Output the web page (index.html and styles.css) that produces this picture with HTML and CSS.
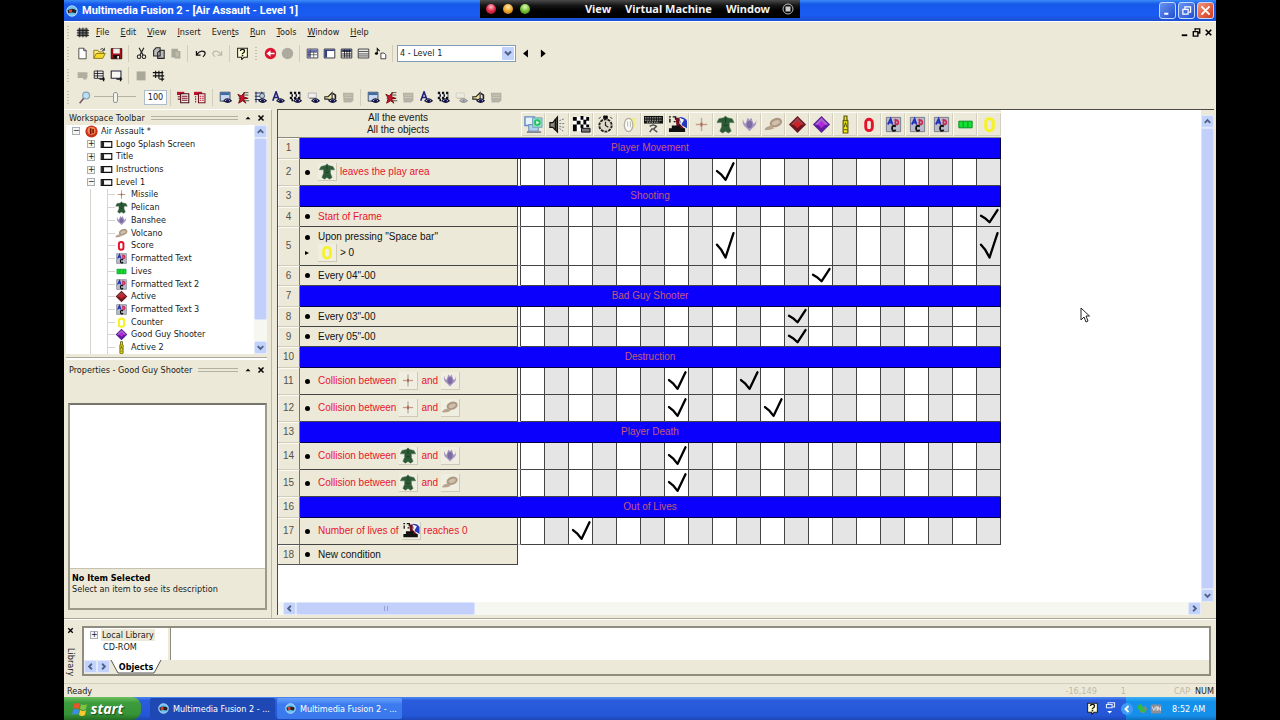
FILE: index.html
```html
<!DOCTYPE html>
<html lang="en">
<head>
<meta charset="utf-8">
<title>Multimedia Fusion 2 - [Air Assault - Level 1]</title>
<link rel="stylesheet" href="styles.css">
</head>
<body>
<svg class="defs" aria-hidden="true">
  <defs>
    <path id="check" d="M4 13L8 16.500L12.500 22.500L20.500 4.500" fill="none" stroke="#000" stroke-width="2.3" stroke-linecap="round" stroke-linejoin="round" vector-effect="non-scaling-stroke"/>
    <symbol id="i-app" viewBox="0 0 16 16"><circle cx="8" cy="8" r="7" fill="#6ac0f0" stroke="#d8f0ff"/><path d="M2 7Q8 3 14 7L13 11Q8 9 3 11z" fill="#222"/><rect x="4" y="6" width="4" height="4" fill="#e04030"/></symbol>
    <symbol id="i-grid" viewBox="0 0 16 16"><path d="M2 3h13v10H2z" fill="#777"/><path d="M1 5.500h15M1 8.500h15M1 11.500h15M4.500 2v12M8.500 2v12M12.500 2v12" stroke="#111" fill="none"/></symbol>
    <symbol id="i-new" viewBox="0 0 16 16"><path d="M3.500 1.500h6l3 3v10h-9z" fill="#fff" stroke="#333"/><path d="M9.500 1.500v3h3" fill="none" stroke="#333"/></symbol>
    <symbol id="i-open" viewBox="0 0 16 16"><path d="M1 14V4h5l1 2h6v3" fill="#ffe873" stroke="#776b10"/><path d="M1 14l3-6h11l-3 6z" fill="#f6d92b" stroke="#776b10"/><path d="M9 3q3-3 5 1m0-3v3h-3" fill="none" stroke="#222"/></symbol>
    <symbol id="i-save" viewBox="0 0 16 16"><path d="M1.500 2h13v12.500h-13z" fill="#a01018" stroke="#220000"/><path d="M4 2h8v6H4z" fill="#eee"/><path d="M4 10h8v4H4z" fill="#111"/><path d="M9 11h2v3H9z" fill="#fff"/></symbol>
    <symbol id="i-cut" viewBox="0 0 16 16"><path d="M5 1l5 9M11 1L6 10" stroke="#222" stroke-width="1.400"/><circle cx="5" cy="12" r="2.200" fill="none" stroke="#222" stroke-width="1.300"/><circle cx="11" cy="12" r="2.200" fill="none" stroke="#222" stroke-width="1.300"/></symbol>
    <symbol id="i-copy" viewBox="0 0 16 16"><path d="M2 4l3-3h5v10H2zM7 7l3-3h5v10H7z" fill="#bbb" stroke="#222" stroke-width="1.300"/></symbol>
    <symbol id="i-paste" viewBox="0 0 16 16"><path d="M3 2h8v3h3v9H7v-1H3z" fill="#aaa899"/><path d="M8 6h4v6H8z" fill="#bdbbab"/></symbol>
    <symbol id="i-undo" viewBox="0 0 16 16"><path d="M3 5v5h5M3.500 9Q8 3 13 6q2 3-2 6" fill="none" stroke="#111" stroke-width="1.500"/></symbol>
    <symbol id="i-redo" viewBox="0 0 16 16"><path d="M13 5v5H8M12.500 9Q8 3 3 6q-2 3 2 6" fill="none" stroke="#bbb9aa" stroke-width="1.500"/></symbol>
    <symbol id="i-help" viewBox="0 0 16 16"><path d="M2 1.500h12v11h-4l-3 3v-3H2z" fill="#ffffd5" stroke="#222" stroke-width="1.300"/><path d="M5.500 5q0-2 2.500-2t2.500 2Q10.500 7 8 8v1" fill="none" stroke="#111" stroke-width="1.600"/><path d="M7 10h2v1.500H7z"/></symbol>
    <symbol id="i-back" viewBox="0 0 16 16"><circle cx="8" cy="8" r="7" fill="#dd1430"/><path d="M3 8l5-4v3h5v2H8v3z" fill="#fff"/></symbol>
    <symbol id="i-fwd" viewBox="0 0 16 16"><circle cx="8" cy="8" r="7" fill="#adab9f"/></symbol>
    <symbol id="i-story" viewBox="0 0 16 16"><path d="M1.500 2.500h13v11h-13z" fill="#fff" stroke="#223"/><path d="M2 3h12v3H2zM2 6h3v7H2z" fill="#6c72b8"/><path d="M2 6.500h12M2 9.500h12M5.500 3v10M9.500 6v7" stroke="#334" stroke-width=".8"/></symbol>
    <symbol id="i-frame" viewBox="0 0 16 16"><path d="M1.500 2.500h13v11h-13z" fill="#fff" stroke="#112"/><path d="M2 3h3v10H2zM5 3h9v2H5z" fill="#334085"/></symbol>
    <symbol id="i-event" viewBox="0 0 16 16"><path d="M1.500 2.500h13v11h-13z" fill="#fff" stroke="#112"/><path d="M2 3h12v2H2z" fill="#334085"/><path d="M2 5.500h12M2 8.500h12M2 11h12M5.500 3v10M8.500 3v10M11.500 3v10" stroke="#111"/></symbol>
    <symbol id="i-list" viewBox="0 0 16 16"><path d="M1.500 2.500h13v11h-13z" fill="#eee" stroke="#222"/><path d="M2 5.500h12M2 8.500h12M2 11h12" stroke="#333"/></symbol>
    <symbol id="i-note" viewBox="0 0 16 16"><path d="M4 8V2l3 3" fill="none" stroke="#111" stroke-width="1.300"/><ellipse cx="3" cy="8" rx="2" ry="1.500"/><path d="M8.500 7.500h4l2 2v5h-6z" fill="#fff" stroke="#222"/></symbol>
    <symbol id="i-gbox" viewBox="0 0 16 16"><path d="M2 4h12v7h-1v2H9v-2H2z" fill="#b0ae9f"/></symbol>
    <symbol id="i-rows" viewBox="0 0 16 16"><path d="M1.500 2.500h11v9h-11zM1.500 5.500h11M1.500 8.500h11M5.500 2v9" fill="#eee" stroke="#111"/><path d="M8 12.500h6.500M13 10v5" fill="none" stroke="#111" stroke-width="1.700"/></symbol>
    <symbol id="i-box" viewBox="0 0 16 16"><path d="M1.500 2.500h12v9h-12z" fill="#f7f7ef" stroke="#224" stroke-width="1.300"/><path d="M8 12.500h7M13 10v5" fill="none" stroke="#111" stroke-width="1.700"/></symbol>
    <symbol id="i-gsq" viewBox="0 0 16 16"><path d="M2 3h11v11H2z" fill="#aaa898"/></symbol>
    <symbol id="i-hash" viewBox="0 0 16 16"><path d="M1 4.500h13M1 8.500h14M4.500 2v9M8.500 2v10M12.500 2v13M9 12.500h6" fill="none" stroke="#111" stroke-width="1.400"/></symbol>
    <symbol id="i-mag" viewBox="0 0 16 16"><circle cx="10" cy="5.500" r="4.200" fill="#b9e0f6" stroke="#88a3b7" stroke-width="1.500"/><path d="M7 9l-5 6" stroke="#7a5a66" stroke-width="2"/></symbol>
    <symbol id="i-rlist" viewBox="0 0 16 16"><path d="M0 1h9v4H0z" fill="#c01030"/><path d="M4.500 3.500h10v11h-10z" fill="#f5f0e8" stroke="#401018" stroke-width="1.300"/><path d="M6 6.500h7M6 9h7M6 11.500h7M1 7h3M1 10h3" stroke="#801028" stroke-width="1.300"/></symbol>
    <symbol id="i-rlist2" viewBox="0 0 16 16"><path d="M0 1h10v4H0z" fill="#c01030"/><path d="M5.500 3.500h8v11h-8z" fill="#f5f0e8" stroke="#701020" stroke-width="1.300"/><path d="M7 6.500h5M7 9h5M7 11.500h5M2 6v8" stroke="#c01028" stroke-width="1.300" stroke-dasharray="2 1"/></symbol>
    <g id="eye"><path d="M6 12q4-5 9 0q-4 4-9 0z" fill="#dde" stroke="#113" stroke-width="1.400"/><circle cx="10.500" cy="12" r="1.900" fill="#115"/></g>
    <symbol id="i-e1" viewBox="0 0 16 16"><path d="M1.500 1.500h12v11h-12z" fill="#c9d8ee" stroke="#235"/><path d="M2 2h11v3H2z" fill="#3c6ca8"/><use href="#eye"/></symbol>
    <symbol id="i-e2" viewBox="0 0 16 16"><path d="M8 2h6M9 5h5M2 9h12M9 12h6" stroke="#333"/><path d="M1 4l4 2 4-4-1 5 5 2-5 1 3 5-4-3-5 3 2-6z" fill="#c81430" stroke="#600"/></symbol>
    <symbol id="i-e3" viewBox="0 0 16 16"><path d="M1 2.500h12M1 6.500h12M1 10.500h9M2.500 1v13M9.500 1v9" stroke="#236" fill="none" stroke-width="1.300"/><circle cx="10" cy="6" r="3" fill="#bcd" stroke="#346"/><use href="#eye"/></symbol>
    <symbol id="i-e4" viewBox="0 0 16 16"><path d="M1 12L5 1l4 11M3 8h5" fill="none" stroke="#22227c" stroke-width="2"/><use href="#eye"/></symbol>
    <symbol id="i-e5" viewBox="0 0 16 16"><path d="M1 1h13v11H1z" fill="#fff"/><path d="M1 2.500h13M1 8.500h13" stroke="#111" stroke-width="3" stroke-dasharray="3 2"/><path d="M3 5.500h11M3 11h9" stroke="#111" stroke-width="3" stroke-dasharray="2 3"/><use href="#eye"/></symbol>
    <symbol id="i-e6" viewBox="0 0 16 16"><path d="M1.500 2.500h10v6h-10z" fill="#eee" stroke="#aaa"/><path d="M3 9h9" stroke="#666"/><use href="#eye"/></symbol>
    <symbol id="i-e7" viewBox="0 0 16 16"><path d="M1 7h4l5-5v11l-5-3H1z" fill="#f2e7a0" stroke="#222" stroke-width="1.300"/><path d="M11 3l3 2v5" stroke="#222" fill="none" stroke-width="2"/><use href="#eye"/></symbol>
    <symbol id="i-e8" viewBox="0 0 16 16"><path d="M1 2h13v10l-3 2H2z" fill="#b5b3a5"/><path d="M3 5h9M3 8h9" stroke="#cfcdbf"/></symbol>
    <symbol id="i-proj" viewBox="0 0 16 16"><circle cx="8" cy="8" r="7.500" fill="#c8301c"/><circle cx="8" cy="7" r="5" fill="#f08a50"/><path d="M6 4h2v7H6zM9 5h2v5H9z" fill="#7c1408"/></symbol>
    <symbol id="i-lvl" viewBox="0 0 16 16"><path d="M1.500 4.500h13v7h-13z" fill="#fff" stroke="#111" stroke-width="1.400"/><path d="M2 5h3v6H2z" fill="#222"/></symbol>
    <symbol id="i-missile" viewBox="0 0 20 20"><path d="M10 3v14" stroke="#b7aaa0" stroke-width="1.500"/><path d="M4 10h12" stroke="#c59a84" stroke-width="1.500"/><path d="M9 8h2v4H9z" fill="#a26a58"/></symbol>
    <symbol id="i-pelican" viewBox="0 0 20 20"><path d="M3 4l5-1 2-2 2 2 5 1 2 4-5 0v4l2 5-3 2-3-2-3 2-3-2 2-5V8L1 8z" fill="#2e5a38" stroke="#4b7450" stroke-width=".6"/><path d="M10 3v5M8 11h4" stroke="#173d20"/></symbol>
    <symbol id="i-banshee" viewBox="0 0 20 20"><path d="M3 4q1 5 3 5l2-6 2 2 2-2 2 6q3 0 3-5 1 7-3 9l-4 4-4-4Q2 11 3 4z" fill="#a596c2"/><ellipse cx="10" cy="10" rx="3" ry="4" fill="#7d6ca4"/></symbol>
    <symbol id="i-volcano" viewBox="0 0 20 20"><ellipse cx="12.500" cy="8" rx="5.500" ry="3.500" transform="rotate(-20 12.500 8)" fill="#cfc0ae" stroke="#ad9780" stroke-width="2.400"/><path d="M1 14q5-4 7-2l3 2q-4 2-10 2z" fill="#b8a48e"/></symbol>
    <symbol id="i-red" viewBox="0 0 20 20"><path d="M10 1l9 9-9 9-9-9z" fill="#6c1720"/><path d="M10 3l7 7-7 1-7-1z" fill="#a04048"/><path d="M10 6l4 4-4 4-4-4z" fill="#d02028"/></symbol>
    <symbol id="i-purple" viewBox="0 0 20 20"><path d="M10 1l9 9-9 9-9-9z" fill="#5c1c9c"/><path d="M10 3l7 7-7 1-7-1z" fill="#a868c8"/><path d="M10 6l4 4-4 4-4-4z" fill="#b524e0"/></symbol>
    <symbol id="i-act2" viewBox="0 0 20 20"><path d="M8.500 1h3v4l1 1v13h-5V6l1-1z" fill="#f3ea12" stroke="#54510a" stroke-width="1.200"/><path d="M8.500 13l1.500-5 1.500 5M8 15.500h4M8 6h4" stroke="#4c4c0c" fill="none"/></symbol>
    <symbol id="i-score" viewBox="0 0 20 20"><rect x="6" y="4.500" width="7" height="12" rx="3.500" fill="none" stroke="#e4122a" stroke-width="3"/></symbol>
    <symbol id="i-counter" viewBox="0 0 20 20"><rect x="6" y="4" width="8" height="12.500" rx="3.500" fill="none" stroke="#f6f22a" stroke-width="3.200"/></symbol>
    <symbol id="i-lives" viewBox="0 0 20 20"><path d="M3 6.500h14v7H3z" fill="#12e032" stroke="#0a8a20"/><path d="M7.500 7v6M12.500 7v6" stroke="#0a9a22"/></symbol>
    <symbol id="i-text" viewBox="0 0 20 20"><path d="M2.500 2.500h15v15h-15z" fill="#b9bccb" stroke="#777a88"/><path d="M4 10l3-6 2 6M5 8h4" fill="none" stroke="#2530b8" stroke-width="1.800"/><path d="M12 4v6q4 0 3-3t-3 0" fill="none" stroke="#c82850" stroke-width="1.800"/><path d="M12.500 12q-4-2-4 2t4 2" fill="none" stroke="#111" stroke-width="2"/></symbol>
    <symbol id="i-screens" viewBox="0 0 20 20"><path d="M1 2h10v9H1z" fill="#e8f2fa" stroke="#5f8cc0" stroke-width="1.500"/><path d="M5 10h10v7H5z" fill="#b5d0ee" stroke="#6688a8"/><path d="M9 3h10v10H9z" fill="#8ae2ba" stroke="#7aa0c0"/><circle cx="14" cy="8" r="3.500" fill="#25c265"/><path d="M13 6l3 2-3 2z" fill="#fff"/><path d="M3 18h15" stroke="#889" stroke-width="2"/></symbol>
    <symbol id="i-speaker" viewBox="0 0 20 20"><path d="M2 8h3l5-6v16l-5-5H2z" fill="#8c8c80" stroke="#111" stroke-width="1.200"/><path d="M8 4v12" stroke="#111" stroke-width="2"/><path d="M12 6l5-2M12 9h6M12 12l5 1M12 14l4 3" stroke="#777" stroke-dasharray="2 1"/></symbol>
    <symbol id="i-create" viewBox="0 0 20 20"><path d="M1 2h17v15H1z" fill="#fff"/><path d="M1 2h4v4H1zM9 1h3v4H9zM15 2h3v4h-3zM5 6h4v4H5zM12 5h3v5h-3zM1 10h4v7H1zM9 10h3v4H9zM15 10h3v3h-3z"/><path d="M10 14h9v4h-9z" fill="#777" stroke="#111"/></symbol>
    <symbol id="i-watch" viewBox="0 0 20 20"><circle cx="10" cy="11" r="6.500" fill="#ddd9c8" stroke="#222" stroke-width="2" stroke-dasharray="3 1"/><path d="M8 1h4v3H8zM3 4l2-2M15 2l2 2" stroke="#222"/><path d="M10 7v4l3 2" fill="none" stroke="#222" stroke-width="1.300"/></symbol>
    <symbol id="i-player0" viewBox="0 0 20 20"><path d="M10 2l6 2v8l-3 4z" fill="#f3ee8c"/><ellipse cx="9" cy="10.500" rx="4.500" ry="7" fill="#f8f8f4" stroke="#b2b0a6" stroke-width="1.300"/><path d="M8 7v5M11 7v6" stroke="#b8b8b0"/></symbol>
    <symbol id="i-keys" viewBox="0 0 20 20"><path d="M0 1h20v8H0z" fill="#111"/><path d="M1 3h18M1 5.500h18M3 7.500h13" stroke="#d5d5c9" stroke-dasharray="1.500 1"/><path d="M6 12q4-3 7 0l-3 3 4 3M6 18l3-4" fill="none" stroke="#555" stroke-width="1.600"/></symbol>
    <symbol id="i-player" viewBox="0 0 20 20"><path d="M1 2h2M2 4v4M5 2h3v3M6 7h2" stroke="#111" stroke-width="1.500" fill="none"/><path d="M12 2q6 0 8 4v8l-5-3-3-5z" fill="#2638c0"/><path d="M12 3l5 2-3 5z" fill="#f4f4f4"/><path d="M8 3h4v6l5 5v2H3l3-4h3z" fill="#701020"/><path d="M1 14h17v4H1zM4 11h9v3H4z" fill="#111"/></symbol>
    <symbol id="i-flag" viewBox="0 0 16 16"><path d="M2 3q3-2 6 0l-1 5q-3-2-6 0z" fill="#e8532b"/><path d="M9 3q3 2 6 0l-1 5q-3 2-6 0z" fill="#83c341"/><path d="M1 9q3-2 6 0l-1 5q-3-2-6 0z" fill="#3a8cee"/><path d="M8 9q3 2 6 0l-1 5q-3 2-6 0z" fill="#fbc82c"/></symbol>
    <symbol id="i-up" viewBox="0 0 12 12"><path d="M3 7.500l3-3 3 3" fill="none" stroke="#4d6185" stroke-width="2"/></symbol>
    <symbol id="i-down" viewBox="0 0 12 12"><path d="M3 4.500l3 3 3-3" fill="none" stroke="#4d6185" stroke-width="2"/></symbol>
    <symbol id="i-left" viewBox="0 0 12 12"><path d="M7.500 3l-3 3 3 3" fill="none" stroke="#4d6185" stroke-width="2"/></symbol>
    <symbol id="i-right" viewBox="0 0 12 12"><path d="M4.500 3l3 3-3 3" fill="none" stroke="#4d6185" stroke-width="2"/></symbol>
    <symbol id="i-x" viewBox="0 0 12 12"><path d="M3 3l6 6M9 3l-6 6" stroke="#000" stroke-width="1.800"/></symbol>
    <symbol id="i-min" viewBox="0 0 12 12"><path d="M3 9h6" stroke="#000" stroke-width="2"/></symbol>
    <symbol id="i-restore" viewBox="0 0 12 12"><path d="M4.500 4V2h5v4.500h-2M2.500 5h5v5h-5z" fill="none" stroke="#000" stroke-width="1.500"/></symbol>
    <symbol id="i-tri" viewBox="0 0 12 12"><path d="M3 7.500h6L6 4.500z"/></symbol>
  </defs>
</svg>

<div class="desktop">
  <header class="titlebar">
    <svg class="ic"><use href="#i-app"/></svg>
    <h1>Multimedia Fusion 2 - [Air Assault - Level 1]</h1>
    <div class="winbtns">
      <button class="wb" aria-label="Minimize"><svg viewBox="0 0 16 16"><path d="M4 12h5" stroke="#fff" stroke-width="2.500"/></svg></button>
      <button class="wb" aria-label="Restore"><svg viewBox="0 0 16 16"><path d="M6 6V3.500h7V10h-2M3.500 6.500H10v6H3.500z" fill="none" stroke="#fff" stroke-width="1.500"/></svg></button>
      <button class="wb close" aria-label="Close"><svg viewBox="0 0 16 16"><path d="M3 3l10 10M13 3L3 13" stroke="#fff" stroke-width="2.200"/></svg></button>
    </div>
    <div class="macbar">
      <button class="light red" aria-label="Close machine"></button><button class="light amber" aria-label="Minimize machine"></button><button class="light green" aria-label="Zoom machine"></button>
      <nav><a href="#">View</a><a href="#">Virtual Machine</a><a href="#">Window</a></nav>
      <svg class="macstop" viewBox="0 0 12 12"><circle cx="6" cy="6" r="5" fill="none" stroke="#bbb"/><path d="M3.500 3.500h5v5h-5z" fill="#ccc"/></svg>
    </div>
  </header>

  <nav class="menubar">
    <span class="grip"></span>
    <svg class="ic"><use href="#i-grid"/></svg>
    <a href="#"><u>F</u>ile</a><a href="#"><u>E</u>dit</a><a href="#"><u>V</u>iew</a><a href="#"><u>I</u>nsert</a><a href="#">Even<u>t</u>s</a><a href="#"><u>R</u>un</a><a href="#"><u>T</u>ools</a><a href="#"><u>W</u>indow</a><a href="#"><u>H</u>elp</a>
    <div class="mdi">
      <button aria-label="Minimize document"><svg><use href="#i-min"/></svg></button><button aria-label="Restore document"><svg><use href="#i-restore"/></svg></button><button aria-label="Close document"><svg><use href="#i-x"/></svg></button>
    </div>
  </nav>

  <div class="toolbar">
    <span class="grip"></span>
    <button class="tb" aria-label="New"><svg><use href="#i-new"/></svg></button><button class="tb" aria-label="Open"><svg><use href="#i-open"/></svg></button><button class="tb" aria-label="Save"><svg><use href="#i-save"/></svg></button>
    <span class="sep"></span>
    <button class="tb" aria-label="Cut"><svg><use href="#i-cut"/></svg></button><button class="tb" aria-label="Copy"><svg><use href="#i-copy"/></svg></button><button class="tb" aria-label="Paste"><svg><use href="#i-paste"/></svg></button>
    <span class="sep"></span>
    <button class="tb" aria-label="Undo"><svg><use href="#i-undo"/></svg></button><button class="tb" aria-label="Redo"><svg><use href="#i-redo"/></svg></button>
    <span class="sep"></span>
    <button class="tb" aria-label="Help"><svg><use href="#i-help"/></svg></button>
    <span class="grip mid"></span>
    <button class="tb" aria-label="Back"><svg><use href="#i-back"/></svg></button><button class="tb" aria-label="Forward"><svg><use href="#i-fwd"/></svg></button>
    <span class="sep"></span>
    <button class="tb" aria-label="Storyboard editor"><svg><use href="#i-story"/></svg></button><button class="tb" aria-label="Frame editor"><svg><use href="#i-frame"/></svg></button><button class="tb" aria-label="Event editor"><svg><use href="#i-event"/></svg></button><button class="tb" aria-label="Event list editor"><svg><use href="#i-list"/></svg></button><button class="tb" aria-label="Data elements"><svg><use href="#i-note"/></svg></button>
    <span class="sep"></span>
    <div class="combo">
      <select aria-label="Frame"><option>4 - Level 1</option></select>
      <span class="drop"><svg><use href="#i-down"/></svg></span>
    </div>
    <button class="tb" aria-label="Previous frame"><svg viewBox="0 0 16 16"><path d="M11 3v10L5 8z"/></svg></button><button class="tb" aria-label="Next frame"><svg viewBox="0 0 16 16"><path d="M6 3v10l6-5z"/></svg></button>
  </div>

  <div class="toolbar">
    <span class="grip"></span>
    <button class="tb" aria-label="Insert comment"><svg><use href="#i-gbox"/></svg></button><button class="tb" aria-label="Insert rows"><svg><use href="#i-rows"/></svg></button><button class="tb" aria-label="Insert group"><svg><use href="#i-box"/></svg></button>
    <span class="sep"></span>
    <button class="tb" aria-label="Stop"><svg><use href="#i-gsq"/></svg></button><button class="tb" aria-label="Go to line"><svg><use href="#i-hash"/></svg></button>
  </div>

  <div class="toolbar">
    <span class="grip"></span>
    <button class="tb zoomer" aria-label="Zoom"><svg><use href="#i-mag"/></svg></button>
    <input class="slider" type="range" min="0" max="100" value="50" aria-label="Zoom level">
    <input class="pct" type="text" value="100" aria-label="Zoom percentage">
    <span class="sep"></span>
    <div class="g2"><button class="tb" aria-label="Show events"><svg><use href="#i-rlist"/></svg></button><button class="tb" aria-label="Show actions"><svg><use href="#i-rlist2"/></svg></button></div>
    <span class="sep"></span>
    <div class="g8"><button class="tb" aria-label="Filter windows"><svg><use href="#i-e1"/></svg></button><button class="tb" aria-label="Filter actives"><svg><use href="#i-e2"/></svg></button><button class="tb" aria-label="Filter grids"><svg><use href="#i-e3"/></svg></button><button class="tb" aria-label="Filter texts"><svg><use href="#i-e4"/></svg></button><button class="tb" aria-label="Filter backdrops"><svg><use href="#i-e5"/></svg></button><button class="tb" aria-label="Filter controls"><svg><use href="#i-e6"/></svg></button><button class="tb" aria-label="Filter players"><svg><use href="#i-e7"/></svg></button><button class="tb" aria-label="Filter others"><svg><use href="#i-e8"/></svg></button></div>
    <span class="sep"></span>
    <div class="g8"><button class="tb" aria-label="Show windows"><svg><use href="#i-e1"/></svg></button><button class="tb" aria-label="Show actives"><svg><use href="#i-e2"/></svg></button><button class="tb" aria-label="Show grids"><svg><use href="#i-e8"/></svg></button><button class="tb" aria-label="Show texts"><svg><use href="#i-e4"/></svg></button><button class="tb" aria-label="Show backdrops"><svg><use href="#i-e5"/></svg></button><button class="tb dim" aria-label="Show controls"><svg><use href="#i-e6"/></svg></button><button class="tb" aria-label="Show players"><svg><use href="#i-e7"/></svg></button><button class="tb" aria-label="Show others"><svg><use href="#i-e8"/></svg></button></div>
  </div>

  <main class="work">
    <aside class="side">
      <section class="wspace">
        <div class="ptitle"><h2>Workspace Toolbar</h2><i></i><button aria-label="Collapse workspace"><svg><use href="#i-tri"/></svg></button><button aria-label="Close workspace"><svg><use href="#i-x"/></svg></button></div>
        <div class="treebox">
          <ul class="tree">
            <li class="l0"><b class="pm">−</b><svg><use href="#i-proj"/></svg>Air Assault *</li>
            <li class="l1"><b class="pm">+</b><svg><use href="#i-lvl"/></svg>Logo Splash Screen</li>
            <li class="l1"><b class="pm">+</b><svg><use href="#i-lvl"/></svg>Title</li>
            <li class="l1"><b class="pm">+</b><svg><use href="#i-lvl"/></svg>Instructions</li>
            <li class="l1"><b class="pm">−</b><svg><use href="#i-lvl"/></svg>Level 1</li>
            <li class="l2"><svg><use href="#i-missile"/></svg>Missile</li>
            <li class="l2"><svg><use href="#i-pelican"/></svg>Pelican</li>
            <li class="l2"><svg><use href="#i-banshee"/></svg>Banshee</li>
            <li class="l2"><svg><use href="#i-volcano"/></svg>Volcano</li>
            <li class="l2"><svg><use href="#i-score"/></svg>Score</li>
            <li class="l2"><svg><use href="#i-text"/></svg>Formatted Text</li>
            <li class="l2"><svg><use href="#i-lives"/></svg>Lives</li>
            <li class="l2"><svg><use href="#i-text"/></svg>Formatted Text 2</li>
            <li class="l2"><svg><use href="#i-red"/></svg>Active</li>
            <li class="l2"><svg><use href="#i-text"/></svg>Formatted Text 3</li>
            <li class="l2"><svg><use href="#i-counter"/></svg>Counter</li>
            <li class="l2"><svg><use href="#i-purple"/></svg>Good Guy Shooter</li>
            <li class="l2"><svg><use href="#i-act2"/></svg>Active 2</li>
          </ul>
          <div class="vscroll"><button aria-label="Scroll tree up"><svg><use href="#i-up"/></svg></button><span class="thumb"></span><span class="rest"></span><button aria-label="Scroll tree down"><svg><use href="#i-down"/></svg></button></div>
        </div>
      </section>
      <section class="props">
        <div class="ptitle"><h2>Properties - Good Guy Shooter</h2><i></i><button aria-label="Collapse properties"><svg><use href="#i-tri"/></svg></button><button aria-label="Close properties"><svg><use href="#i-x"/></svg></button></div>
        <div class="pbox">
          <div class="pempty"></div>
          <div class="pdesc"><strong>No Item Selected</strong><p>Select an item to see its description</p></div>
        </div>
      </section>
    </aside>

    <section class="editor">
      <div class="sheet">
        <table class="events">
          <colgroup><col class="cn"><col class="ce"><col class="cg"><col class="co" span="20"></colgroup>
          <thead>
            <tr>
              <th colspan="2" class="all">All the events<br>All the objects</th><th class="gap"></th>
              <th><button aria-label="Storyboard controls"><svg><use href="#i-screens"/></svg></button></th>
              <th><button aria-label="Sound"><svg><use href="#i-speaker"/></svg></button></th>
              <th><button aria-label="Create new objects"><svg><use href="#i-create"/></svg></button></th>
              <th><button aria-label="Timer"><svg><use href="#i-watch"/></svg></button></th>
              <th><button aria-label="Special conditions"><svg><use href="#i-player0"/></svg></button></th>
              <th><button aria-label="Mouse and keyboard"><svg><use href="#i-keys"/></svg></button></th>
              <th><button aria-label="Player 1"><svg><use href="#i-player"/></svg></button></th>
              <th><button aria-label="Missile"><svg><use href="#i-missile"/></svg></button></th>
              <th><button aria-label="Pelican"><svg><use href="#i-pelican"/></svg></button></th>
              <th><button aria-label="Banshee"><svg><use href="#i-banshee"/></svg></button></th>
              <th><button aria-label="Volcano"><svg><use href="#i-volcano"/></svg></button></th>
              <th><button aria-label="Active"><svg><use href="#i-red"/></svg></button></th>
              <th><button aria-label="Good Guy Shooter"><svg><use href="#i-purple"/></svg></button></th>
              <th><button aria-label="Active 2"><svg><use href="#i-act2"/></svg></button></th>
              <th><button aria-label="Score"><svg><use href="#i-score"/></svg></button></th>
              <th><button aria-label="Formatted Text"><svg><use href="#i-text"/></svg></button></th>
              <th><button aria-label="Formatted Text 2"><svg><use href="#i-text"/></svg></button></th>
              <th><button aria-label="Formatted Text 3"><svg><use href="#i-text"/></svg></button></th>
              <th><button aria-label="Lives"><svg><use href="#i-lives"/></svg></button></th>
              <th><button aria-label="Counter"><svg><use href="#i-counter"/></svg></button></th>
            </tr>
          </thead>
          <tbody>
            <tr class="grp"><th>1</th><td colspan="22">Player Movement</td></tr>
            <tr class="tall"><th>2</th><td><div class="cond red"><i></i><svg><use href="#i-pelican"/></svg>leaves the play area</div></td><td></td><td></td><td></td><td></td><td></td><td></td><td></td><td></td><td></td><td><svg class="ck" viewBox="0 0 24 28" preserveAspectRatio="none"><use href="#check"/></svg></td><td></td><td></td><td></td><td></td><td></td><td></td><td></td><td></td><td></td><td></td><td></td></tr>
            <tr class="grp"><th>3</th><td colspan="22">Shooting</td></tr>
            <tr class="short"><th>4</th><td><div class="cond red"><i></i>Start of Frame</div></td><td></td><td></td><td></td><td></td><td></td><td></td><td></td><td></td><td></td><td></td><td></td><td></td><td></td><td></td><td></td><td></td><td></td><td></td><td></td><td></td><td><svg class="ck" viewBox="0 0 24 28" preserveAspectRatio="none"><use href="#check"/></svg></td></tr>
            <tr class="dbl"><th>5</th><td><div class="cond"><i></i>Upon pressing "Space bar"</div><div class="cond"><i class="and"></i><svg><use href="#i-counter"/></svg>&gt; 0</div></td><td></td><td></td><td></td><td></td><td></td><td></td><td></td><td></td><td></td><td><svg class="ck" viewBox="0 0 24 28" preserveAspectRatio="none"><use href="#check"/></svg></td><td></td><td></td><td></td><td></td><td></td><td></td><td></td><td></td><td></td><td></td><td><svg class="ck" viewBox="0 0 24 28" preserveAspectRatio="none"><use href="#check"/></svg></td></tr>
            <tr class="short"><th>6</th><td><div class="cond"><i></i>Every 04"-00</div></td><td></td><td></td><td></td><td></td><td></td><td></td><td></td><td></td><td></td><td></td><td></td><td></td><td></td><td><svg class="ck" viewBox="0 0 24 28" preserveAspectRatio="none"><use href="#check"/></svg></td><td></td><td></td><td></td><td></td><td></td><td></td><td></td></tr>
            <tr class="grp"><th>7</th><td colspan="22">Bad Guy Shooter</td></tr>
            <tr class="short"><th>8</th><td><div class="cond"><i></i>Every 03"-00</div></td><td></td><td></td><td></td><td></td><td></td><td></td><td></td><td></td><td></td><td></td><td></td><td></td><td><svg class="ck" viewBox="0 0 24 28" preserveAspectRatio="none"><use href="#check"/></svg></td><td></td><td></td><td></td><td></td><td></td><td></td><td></td><td></td></tr>
            <tr class="short"><th>9</th><td><div class="cond"><i></i>Every 05"-00</div></td><td></td><td></td><td></td><td></td><td></td><td></td><td></td><td></td><td></td><td></td><td></td><td></td><td><svg class="ck" viewBox="0 0 24 28" preserveAspectRatio="none"><use href="#check"/></svg></td><td></td><td></td><td></td><td></td><td></td><td></td><td></td><td></td></tr>
            <tr class="grp"><th>10</th><td colspan="22">Destruction</td></tr>
            <tr class="tall"><th>11</th><td><div class="cond red"><i></i>Collision between <svg><use href="#i-missile"/></svg>and <svg><use href="#i-banshee"/></svg></div></td><td></td><td></td><td></td><td></td><td></td><td></td><td></td><td><svg class="ck" viewBox="0 0 24 28" preserveAspectRatio="none"><use href="#check"/></svg></td><td></td><td></td><td><svg class="ck" viewBox="0 0 24 28" preserveAspectRatio="none"><use href="#check"/></svg></td><td></td><td></td><td></td><td></td><td></td><td></td><td></td><td></td><td></td><td></td></tr>
            <tr class="tall"><th>12</th><td><div class="cond red"><i></i>Collision between <svg><use href="#i-missile"/></svg>and <svg><use href="#i-volcano"/></svg></div></td><td></td><td></td><td></td><td></td><td></td><td></td><td></td><td><svg class="ck" viewBox="0 0 24 28" preserveAspectRatio="none"><use href="#check"/></svg></td><td></td><td></td><td></td><td><svg class="ck" viewBox="0 0 24 28" preserveAspectRatio="none"><use href="#check"/></svg></td><td></td><td></td><td></td><td></td><td></td><td></td><td></td><td></td><td></td></tr>
            <tr class="grp"><th>13</th><td colspan="22">Player Death</td></tr>
            <tr class="tall"><th>14</th><td><div class="cond red"><i></i>Collision between <svg><use href="#i-pelican"/></svg>and <svg><use href="#i-banshee"/></svg></div></td><td></td><td></td><td></td><td></td><td></td><td></td><td></td><td><svg class="ck" viewBox="0 0 24 28" preserveAspectRatio="none"><use href="#check"/></svg></td><td></td><td></td><td></td><td></td><td></td><td></td><td></td><td></td><td></td><td></td><td></td><td></td><td></td></tr>
            <tr class="tall"><th>15</th><td><div class="cond red"><i></i>Collision between <svg><use href="#i-pelican"/></svg>and <svg><use href="#i-volcano"/></svg></div></td><td></td><td></td><td></td><td></td><td></td><td></td><td></td><td><svg class="ck" viewBox="0 0 24 28" preserveAspectRatio="none"><use href="#check"/></svg></td><td></td><td></td><td></td><td></td><td></td><td></td><td></td><td></td><td></td><td></td><td></td><td></td><td></td></tr>
            <tr class="grp"><th>16</th><td colspan="22">Out of Lives</td></tr>
            <tr class="tall"><th>17</th><td><div class="cond red"><i></i>Number of lives of <svg><use href="#i-player"/></svg>reaches 0</div></td><td></td><td></td><td></td><td><svg class="ck" viewBox="0 0 24 28" preserveAspectRatio="none"><use href="#check"/></svg></td><td></td><td></td><td></td><td></td><td></td><td></td><td></td><td></td><td></td><td></td><td></td><td></td><td></td><td></td><td></td><td></td><td></td></tr>
            <tr class="short"><th>18</th><td><div class="cond"><i></i>New condition</div></td></tr>
          </tbody>
        </table>
        <svg class="cursor" viewBox="0 0 10 17"><path d="M1 1v12l3-3 2 5 2-1-2-5h3.500z" fill="#fff" stroke="#222"/></svg>
      </div>
      <div class="vscroll main"><button aria-label="Scroll up"><svg><use href="#i-up"/></svg></button><span class="thumb"></span><button aria-label="Scroll down"><svg><use href="#i-down"/></svg></button></div>
      <div class="hscroll"><button aria-label="Scroll left"><svg><use href="#i-left"/></svg></button><span class="thumb"></span><span class="rest"></span><button aria-label="Scroll right"><svg><use href="#i-right"/></svg></button></div>
    </section>
  </main>

  <section class="library">
    <div class="lside"><button aria-label="Close library"><svg><use href="#i-x"/></svg></button><h2>Library</h2></div>
    <div class="lbox">
      <div class="ltree">
        <ul><li><b class="pm">+</b><span class="sel">Local Library</span></li><li class="cd">CD-ROM</li></ul>
      </div>
      <div class="lview"></div>
      <div class="ltabs"><button class="sb" aria-label="Previous tab"><svg><use href="#i-left"/></svg></button><button class="sb" aria-label="Next tab"><svg><use href="#i-right"/></svg></button><button class="tab"><svg viewBox="0 0 52 14" preserveAspectRatio="none"><path d="M1 0l7 13h36l7-13" fill="#fff" stroke="#555"/></svg><span>Objects</span></button></div>
    </div>
  </section>

  <footer class="status"><span>Ready</span><span class="off pos">-16,149</span><span class="off one">1</span><span class="off cap">CAP</span><span>NUM</span></footer>

  <div class="taskbar">
    <button class="start"><svg><use href="#i-flag"/></svg>start</button>
    <button class="task on"><svg><use href="#i-app"/></svg>Multimedia Fusion 2 - ...</button>
    <button class="task"><svg><use href="#i-app"/></svg>Multimedia Fusion 2 - ...</button>
    <div class="lang"><svg><use href="#i-help"/></svg><svg viewBox="0 0 16 16"><path d="M5 3V1h8v5h-2M3 3h7v4H3z" fill="none" stroke="#dfe9ff" stroke-width="1.300"/><path d="M4 11h6l-3 3z" fill="#fff"/></svg></div>
    <div class="tray">
      <button class="exp" aria-label="Show hidden icons"><svg viewBox="0 0 12 12"><circle cx="6" cy="6" r="6" fill="#3f9cf5"/><path d="M7.500 3l-3 3 3 3" fill="none" stroke="#fff" stroke-width="1.800"/></svg></button>
      <svg viewBox="0 0 16 16"><path d="M5 6l8-2 2 5-5 5-5-2z" fill="#7c8a84"/><path d="M2 4l5-3 2 5 4 4-3 3-4-3-3-2z" fill="#2fbf3c"/></svg>
      <svg viewBox="0 0 16 16"><rect x="1" y="2" width="14" height="12" rx="2" fill="#8d8d98"/><path d="M3 5l2 5 2-5M8 10V5h2v5M11 10V5l3 5V5" fill="none" stroke="#eee"/></svg>
      <time>8:52 AM</time>
    </div>
  </div>
</div>
</body>
</html>
```
FILE: styles.css
```css
* { box-sizing: border-box; }
body {
  margin: 0;
  padding: 0 5%;
  background: #000;
  font-family: "DejaVu Sans Condensed", "DejaVu Sans", sans-serif;
  font-size: 9px;
  line-height: 12px;
  color: #1a1a1a;
}
h1, h2, p, ul { margin: 0; padding: 0; }
h2 { font-size: 9px; font-weight: normal; white-space: nowrap; }
ul { list-style: none; }
a { color: inherit; text-decoration: none; }
button { border: 0; padding: 0; margin: 0; background: none; font: inherit; color: inherit; display: flex; align-items: center; justify-content: center; }
svg { display: block; flex: none; }
.defs { position: absolute; width: 0; height: 0; }

.desktop { min-height: 100vh; display: flex; flex-direction: column; background: #ece9d8; }

/* Title bar */
.titlebar {
  position: relative; height: 21px; display: flex; align-items: center; gap: 4px; padding: 0 2px 0 2px;
  background: linear-gradient(#3b8cf8 0, #1658e8 20%, #1a5cf4 70%, #1b50d0 100%);
}
.titlebar .ic { width: 12px; height: 12px; }
.titlebar h1 { font: bold 11px/20px Roboto, "Noto Sans", sans-serif; color: #fff; white-space: nowrap; }
.winbtns { margin-left: auto; display: flex; gap: 2px; }
.wb { width: 17px; height: 17px; border: 1px solid #c6d8ff; border-radius: 3px; background: linear-gradient(135deg, #6b93f0, #1f4fd0); }
.wb svg { width: 13px; height: 13px; }
.wb.close { background: linear-gradient(135deg, #f0957a, #d4381a); }
.macbar {
  position: absolute; top: 0; left: 50%; width: 320px; height: 18px; margin-left: -160px; padding: 0 6px;
  display: flex; align-items: center; gap: 7px; background: linear-gradient(#4a4a4a 0, #161616 30%, #000 60%);
  color: #f2f2f2; font: bold 11px/18px "Noto Sans", sans-serif;
}
.macbar nav { margin-left: auto; display: flex; gap: 14px; white-space: nowrap; }
.light { width: 10px; height: 10px; border-radius: 50%; }
.light.red { background: radial-gradient(circle at 50% 30%, #ffc0c8, #e02848 50%, #a01028); }
.light.amber { background: radial-gradient(circle at 50% 30%, #ffeeb0, #f0a428 50%, #a86810); }
.light.green { background: radial-gradient(circle at 50% 30%, #e0ffc0, #78c030 50%, #407810); }
.macstop { width: 12px; height: 12px; margin-left: 5px; }

/* Menu and toolbars */
.menubar, .toolbar { display: flex; align-items: center; padding: 0 2px; }
.menubar { height: 21px; gap: 11px; border-top: 1px solid #fff; }
.menubar .ic { width: 13px; height: 13px; margin: 0 -4px 0 -9px; }
.mdi { margin-left: auto; display: flex; }
.mdi button { width: 12px; }
.mdi svg { width: 11px; height: 11px; }
.toolbar { height: 22px; }
.grip { width: 8px; height: 14px; flex: none; background: radial-gradient(circle, #c3c0ae 1px, transparent 1px) 0 0 / 4px 3px repeat-y; }
.grip.mid { width: 5px; margin: 0 3px; }
.tb { width: 17px; height: 18px; flex: none; }
.tb svg { width: 13px; height: 13px; }
.tb.dim { opacity: .4; }
.sep { width: 8px; height: 17px; flex: none; background: linear-gradient(#d0cdbb, #d0cdbb) 3px 0 / 1px 100% no-repeat; }
.g8, .g2 { display: flex; }
.g8 { width: 140px; }
.g2 { width: 34px; }
.g8 .tb, .g2 .tb { flex: 1; width: auto; }
.combo { display: flex; width: 119px; height: 17px; margin-right: 1px; background: #fff; border: 1px solid #7f9db9; }
.combo select { flex: 1; min-width: 0; appearance: none; border: 0; background: none; padding: 0 2px; font: inherit; color: inherit; }
.drop { width: 12px; margin: 1px; display: flex; align-items: center; background: #c3d2fb; }
.drop svg { width: 12px; height: 12px; }
.zoomer { width: 20px; }
.slider { width: 42px; height: 14px; margin: 0 8px 0 0; appearance: none; background: linear-gradient(#b5b3a4, #b5b3a4) 0 6px / 100% 1px no-repeat; }
.slider::-webkit-slider-thumb { appearance: none; width: 5px; height: 11px; border: 1px solid #8c9a9c; border-radius: 2px; background: #f4f3ec; }
.pct { width: 23px; height: 15px; padding: 0; border: 1px solid #aebccc; background: #fff; text-align: center; font: inherit; color: inherit; }

/* Work area */
.work { flex: 1; display: grid; grid-template-columns: 208px 1fr; min-height: 0; padding-top: 1px; }
.side { display: flex; flex-direction: column; padding: 0 4px 8px 2px; border-right: 1px solid #bbb8a6; border-top: 1px solid #fff; }
.ptitle { height: 15px; display: flex; align-items: center; padding-left: 3px; }
.ptitle i { flex: 1; height: 4px; margin: 0 3px 0 6px; border: solid #b2b0a0; border-width: 1px 0; }
.ptitle svg { width: 10px; height: 10px; }
.ptitle button { width: 13px; }
.wspace { padding-bottom: 3px; border-bottom: 1px solid #aaa898; box-shadow: 0 2px 0 #fff; }
.treebox { display: flex; height: 229px; overflow: hidden; background: #fff; }
.tree { flex: 1; height: 229px; display: grid; grid-template-rows: repeat(18, minmax(0, 1fr)); line-height: 11px; }
.tree li { display: flex; align-items: center; white-space: nowrap; }
.tree svg { width: 13px; height: 13px; margin-right: 3px; }
.l0 { padding-left: 6px; }
.l1 { padding-left: 21px; }
.l2 {
  padding-left: 49px;
  background:
    linear-gradient(#d5d5cd, #d5d5cd) 24px 0 / 1px 100% no-repeat,
    linear-gradient(#d5d5cd, #d5d5cd) 41px 0 / 1px 100% no-repeat,
    linear-gradient(#d5d5cd, #d5d5cd) 41px 50% / 8px 1px no-repeat;
}
.pm { width: 8px; height: 8px; margin-right: 5px; border: 1px solid #a8b0b4; background: #f6f5ef; font: 8px/6px "DejaVu Sans", sans-serif; text-align: center; flex: none; }
.vscroll { width: 13px; display: flex; flex-direction: column; background: #f7f7f2; }
.vscroll button, .hscroll button, .sb { width: 13px; height: 13px; flex: none; background: #c3d2fb; border: 1px solid #e2e9fd; border-radius: 2px; }
.vscroll svg, .hscroll svg, .sb svg { width: 11px; height: 11px; }
.thumb { background: #c1cffa; border: 1px solid #dbe4fd; border-radius: 2px; }
.vscroll .thumb { flex: 181; }
.vscroll .rest { flex: 21; }
.props { flex: 1; display: flex; flex-direction: column; padding-top: 4px; }
.pbox { flex: 1; display: flex; flex-direction: column; margin: 26px 0 0 2px; border: 2px solid #9c9a8a; border-top-color: #77756a; }
.pempty { flex: 1; background: #fff; border-bottom: 1px solid #c5c2b2; }
.pdesc { height: 39px; padding: 4px 2px; line-height: 11px; }
.pdesc strong, .pdesc p { display: block; white-space: nowrap; }
.pdesc strong { color: #000; }

.editor {
  display: grid; grid-template: 1fr 13px / 1fr 13px; min-width: 0;
  margin: 0 2px 3px 5px; background: #fff; border-top: 1px solid #4e4c42; border-left: 1px solid #4e4c42;
}
.sheet { position: relative; min-width: 0; overflow: hidden; }
.vscroll.main { padding-top: 5px; background: #ece9d8; }
.hscroll { grid-column: 1 / -1; display: flex; padding: 0 13px 0 5px; background: linear-gradient(90deg, #f7f7f2, #f7f7f2) 0 0 / calc(100% - 13px) 100% no-repeat #ece9d8; }
.hscroll .thumb { width: 179px; background: linear-gradient(90deg, #8fa4dd 1px, transparent 1px 3px, #8fa4dd 3px) 50% 50% / 4px 5px no-repeat #c1cffa; }
.hscroll .rest { flex: 1; }
.cursor { position: absolute; left: 802px; top: 197px; width: 10px; height: 17px; }

/* Event table */
.events { width: 723px; table-layout: fixed; border-collapse: separate; border-spacing: 0; font-family: "Liberation Sans", Arial, sans-serif; font-size: 10px; }
.cn { width: 22px; }
.ce { width: 218px; }
.cg { width: 3px; }
.co { width: 24px; }
.events th, .events td { padding: 0; font-weight: normal; vertical-align: middle; }
.events thead th { height: 28px; background: #ece9d8; border-bottom: 1px solid #8b897c; }
.events thead button { width: 24px; height: 24px; border: solid #fbfaf4; border-width: 1px 0 0 1px; box-shadow: inset -1px -1px 0 #d2cfbe; }
.events thead svg { width: 19px; height: 19px; }
.events thead .all { line-height: 12px; text-align: center; }
.events tbody th { text-align: center; color: #55534a; background: #ece9d8; border-right: 1px solid #77756a; border-bottom: 1px solid #d0cdbd; box-shadow: inset 1px 1px 0 #fbfaf4; }
.events tbody td { border-right: 1px solid #444; border-bottom: 1px solid #444; background: #fff; }
.events tbody td:nth-child(2) { background: #ece9d8; }
.events tbody td:nth-child(3) { border-bottom-color: #ccc; }
.events tbody td:nth-child(n+5):nth-child(odd) { background: #e5e5e5; }
.events .grp td:nth-child(2) { background: #0c00fd; color: #c45c74; text-align: center; border-color: #000040; }
.events tbody tr:nth-last-child(-n+2) th { border-bottom-color: #555; }
.grp > * { height: 21px; }
.tall > * { height: 27px; }
.short > * { height: 20px; }
.dbl > * { height: 39px; }
.ck { width: 24px; height: 26px; }
.short .ck { height: 19px; }
.dbl .ck { height: 38px; }
.cond { display: flex; align-items: center; gap: 3px; padding-left: 5px; white-space: nowrap; line-height: 14px; color: #111; }
.cond.red { color: #e8142c; }
.cond i { width: 5px; height: 5px; margin-right: 5px; border-radius: 50%; background: #000; }
.cond i.and { border-radius: 0; background: none; height: 4px; border: solid transparent; border-width: 2px 0 2px 4px; border-left-color: #000; }
.cond svg { width: 19px; height: 18px; border: solid #cdcaba; border-width: 0 1px 1px 0; background: #f0eee0; }

/* Library */
.library { display: flex; height: 65px; padding: 7px 5px 7px 2px; border-top: 1px solid #aaa898; box-shadow: inset 0 1px 0 #fff; }
.lside { width: 16px; height: 50px; display: flex; flex-direction: column; align-items: flex-start; justify-content: space-between; }
.lside svg { width: 9px; height: 9px; }
.lside h2 { writing-mode: vertical-rl; line-height: 10px; }
.lbox { flex: 1; display: grid; grid-template: 1fr 14px / 86px 1fr; border: 2px solid #8f8d7f; }
.ltree { background: #fff; border-right: 2px solid #ece9d8; padding: 1px 6px; }
.ltree li { display: flex; height: 12px; align-items: center; white-space: nowrap; }
.ltree .cd { padding-left: 13px; }
.sel { background: #ece9d8; padding: 0 1px; }
.ltree .pm { margin-right: 3px; }
.lview { background: #fff; border-left: 1px solid #8f8d7f; }
.ltabs { grid-column: 1 / -1; display: flex; }
.tab { position: relative; width: 52px; height: 14px; font-weight: bold; color: #000; }
.tab svg { position: absolute; inset: 0; width: 100%; height: 100%; }
.tab span { position: relative; }

/* Status bar and task bar */
.status { height: 14px; display: flex; align-items: center; padding: 0 2px 0 3px; border-top: 1px solid #d2cfbf; }
.off { color: #bdbaa8; }
.pos { margin-left: auto; }
.one { margin-left: 24px; }
.cap { margin: 0 5px 0 48px; }
.taskbar { height: 23px; display: flex; background: linear-gradient(#4b8af2 0, #2a5cdc 15%, #2457d8 80%, #1c46b4 100%); color: #fff; }
.start { width: 77px; gap: 3px; margin-right: 9px; padding-right: 10px; border-radius: 0 9px 9px 0; background: linear-gradient(#6cc060 0, #3c9c3c 25%, #369336 75%, #246c24 100%); font: italic bold 14px/20px "Open Sans", sans-serif; text-shadow: 1px 1px 1px #1c4c1c; }
.start svg { width: 16px; height: 16px; }
.task { width: 125px; margin: 1px 2px 1px 0; gap: 4px; justify-content: flex-start; padding-left: 8px; border-radius: 2px; background: linear-gradient(#69a2fb, #3c7cf0 30%, #3a78ea); white-space: nowrap; }
.task svg { width: 11px; height: 11px; }
.task.on { background: #1e48b4; }
.lang { margin-left: auto; display: flex; align-items: center; gap: 5px; margin-right: 9px; }
.lang svg { width: 13px; height: 13px; }
.tray { width: 90px; display: flex; align-items: center; gap: 2px; background: linear-gradient(#3fb2f5 0, #1490ea 20%, #1490ea 80%, #0f70c0 100%); }
.tray svg { width: 12px; height: 12px; }
.exp { margin-left: -6px; width: 14px; }
.tray time { margin-left: 8px; white-space: nowrap; }
```
